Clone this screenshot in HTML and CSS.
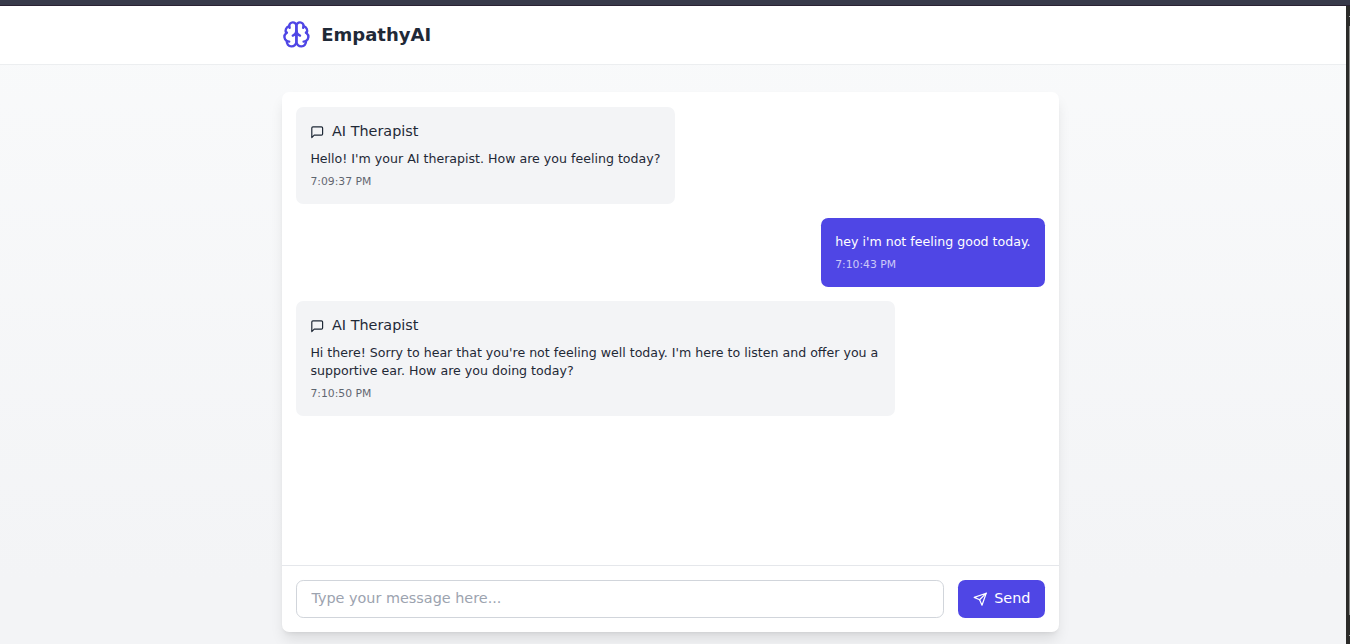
FILE: index.html
```html
<!DOCTYPE html>
<html lang="en">
<head>
<meta charset="utf-8">
<title>EmpathyAI</title>
<link rel="stylesheet" href="styles.css">
</head>
<body>
<svg class="defs" aria-hidden="true">
  <symbol id="message" viewBox="0 0 24 24"><path d="M21 15a2 2 0 0 1-2 2H7l-4 4V5a2 2 0 0 1 2-2h14a2 2 0 0 1 2 2z"/></symbol>
</svg>
<div class="window-bar"></div>
<div class="window">
  <div class="page">
    <header class="header">
      <div class="brand">
        <svg class="icon brand-icon" viewBox="0 0 24 24">
          <path d="M12 5a3 3 0 1 0-5.997.125 4 4 0 0 0-2.526 5.77 4 4 0 0 0 .556 6.588A4 4 0 1 0 12 18Z"/>
          <path d="M12 5a3 3 0 1 1 5.997.125 4 4 0 0 1 2.526 5.77 4 4 0 0 1-.556 6.588A4 4 0 1 1 12 18Z"/>
          <path d="M15 13a4.5 4.5 0 0 1-3-4 4.5 4.5 0 0 1-3 4"/>
          <path d="M17.599 6.5a3 3 0 0 0 .399-1.375"/>
          <path d="M6.003 5.125A3 3 0 0 0 6.401 6.5"/>
          <path d="M3.477 10.896a4 4 0 0 1 .585-.396"/>
          <path d="M19.938 10.5a4 4 0 0 1 .585.396"/>
          <path d="M6 18a4 4 0 0 1-1.967-.516"/>
          <path d="M19.967 17.484A4 4 0 0 1 18 18"/>
        </svg>
        <h1 class="brand-name">EmpathyAI</h1>
      </div>
    </header>
    <main class="chat">
      <div class="messages">
        <article class="message">
          <div class="sender"><svg class="icon sender-icon"><use href="#message"/></svg><span>AI Therapist</span></div>
          <p class="text">Hello! I'm your AI therapist. How are you feeling today?</p>
          <time class="time">7:09:37 PM</time>
        </article>
        <article class="message message-user">
          <p class="text">hey i'm not feeling good today.</p>
          <time class="time">7:10:43 PM</time>
        </article>
        <article class="message">
          <div class="sender"><svg class="icon sender-icon"><use href="#message"/></svg><span>AI Therapist</span></div>
          <p class="text">Hi there! Sorry to hear that you're not feeling well today. I'm here to listen and offer you a supportive ear. How are you doing today?</p>
          <time class="time">7:10:50 PM</time>
        </article>
      </div>
      <form class="composer">
        <input class="input" type="text" placeholder="Type your message here...">
        <button class="send" type="button">
          <svg class="icon send-icon" viewBox="0 0 24 24"><path d="m22 2-7 20-4-9-9-4Z"/><path d="M22 2 11 13"/></svg>
          <span>Send</span>
        </button>
      </form>
    </main>
  </div>
  <div class="edge"><div class="edge-mark"></div><div class="edge-track"></div><div class="edge-mark"></div></div>
</div>
</body>
</html>
```
FILE: styles.css
```css
* { box-sizing: border-box; margin: 0; }
body {
  height: 644px;
  overflow: hidden;
  display: flex;
  flex-direction: column;
  font-family: "DejaVu Sans", sans-serif;
  font-size: 14.4px;
  line-height: 21.6px;
  color: #1f2937;
}
.defs { display: none; }
.icon {
  fill: none;
  stroke: currentColor;
  stroke-width: 2;
  stroke-linecap: round;
  stroke-linejoin: round;
  flex: none;
}
.window-bar {
  height: 6px;
  flex: none;
  background: #383a4a;
  border-bottom: 1px solid #2a2233;
}
.window { display: flex; flex: 1; min-height: 0; }
.page {
  width: 1346px;
  display: flex;
  flex-direction: column;
  background: linear-gradient(#f9fafb, #f3f4f6 90%);
}
.header {
  height: 59px;
  flex: none;
  background: #fff;
  border-bottom: 1px solid #eceef0;
  padding-left: 281.7px;
  display: flex;
  align-items: center;
}
.brand { display: flex; align-items: center; gap: 10.8px; }
.brand-icon { width: 28.8px; height: 28.8px; margin-bottom: 1.6px; color: #4f46e5; }
.brand-name { font-size: 18px; line-height: 25px; font-weight: 700; }
.chat {
  width: 777px;
  height: 540px;
  flex: none;
  margin: 27px 0 0 282px;
  display: flex;
  flex-direction: column;
  background: #fff;
  border-radius: 7.2px;
  box-shadow: 0 9px 13.5px -2.7px rgb(0 0 0 / .1), 0 3.6px 5.4px -3.6px rgb(0 0 0 / .1);
}
.messages {
  flex: 1;
  padding: 15px 14px;
  display: flex;
  flex-direction: column;
  align-items: flex-start;
  gap: 14px;
}
.message {
  max-width: 599px;
  padding: 15px 14.4px;
  border-radius: 7.2px;
  background: #f3f4f6;
}
.message-user { align-self: flex-end; background: #4f46e5; color: #fff; }
.sender {
  display: flex;
  align-items: center;
  gap: 7.2px;
  height: 21px;
  padding-bottom: 2px;
  margin-bottom: 7px;
  line-height: 19px;
}
.sender-icon { width: 14.4px; height: 14.4px; margin-top: 1px; }
.text { font-size: 12.6px; line-height: 18px; }
.time { display: block; margin-top: 6px; font-size: 10.8px; line-height: 15px; opacity: .7; }
.composer {
  height: 67px;
  flex: none;
  padding: 14px;
  display: flex;
  gap: 14px;
  border-top: 1px solid #e5e7eb;
}
.input {
  flex: 1;
  min-width: 0;
  height: 38px;
  padding: 0 14.4px 2px;
  border: 1px solid #d1d5db;
  border-radius: 7.2px;
  background: #fff;
  font: inherit;
}
.input::placeholder { color: #9ca3af; opacity: 1; }
.send {
  width: 87px;
  height: 38px;
  padding: 0 0 1px;
  border: 0;
  border-radius: 7.2px;
  display: flex;
  align-items: center;
  justify-content: center;
  gap: 7.2px;
  background: #4f46e5;
  color: #fff;
  font: inherit;
}
.send-icon { width: 14.4px; height: 14.4px; margin-top: 2px; }
.edge {
  width: 4px;
  padding-top: 10px;
  display: flex;
  flex-direction: column;
  align-items: flex-end;
  background: #2b2b29;
}
.edge-mark { width: 1px; height: 1px; background: #aaa; }
.edge-track { width: 1px; height: 589px; margin: 9px 0 20px; background: #8b8b89; }
```
